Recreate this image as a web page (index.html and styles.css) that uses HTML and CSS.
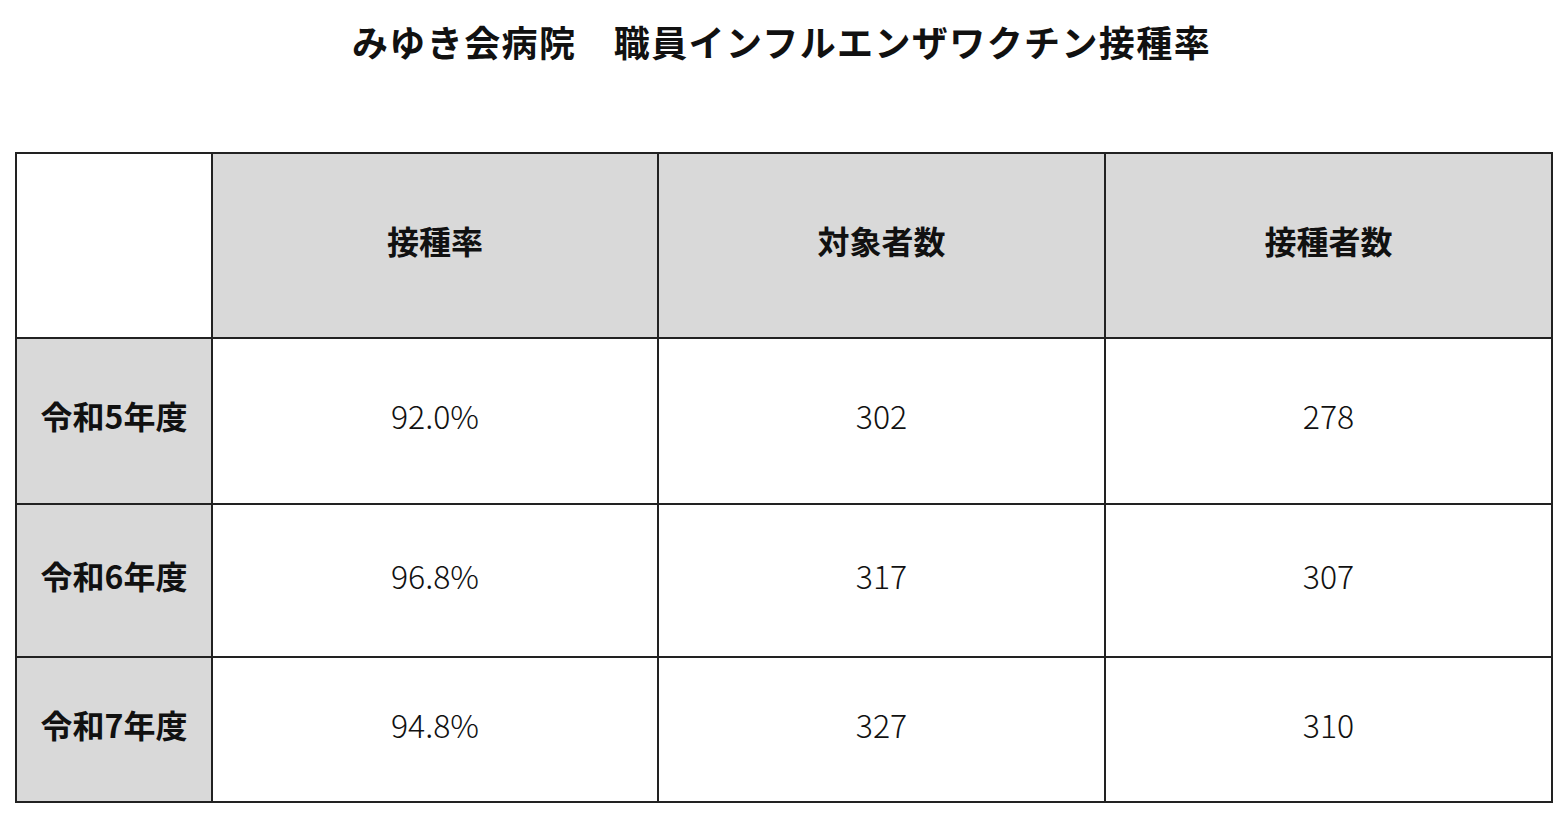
FILE: index.html
```html
<!DOCTYPE html>
<html lang="ja">
<head>
<meta charset="utf-8">
<title>みゆき会病院　職員インフルエンザワクチン接種率</title>
<link rel="stylesheet" href="styles.css">
</head>
<body>
<h1 class="title">みゆき会病院　職員インフルエンザワクチン接種率</h1>
<div class="grid">
  <div class="cell corner"></div>
  <div class="cell head">接種率</div>
  <div class="cell head">対象者数</div>
  <div class="cell head">接種者数</div>

  <div class="cell rowhead">令和5年度</div>
  <div class="cell val">92.0%</div>
  <div class="cell val">302</div>
  <div class="cell val">278</div>

  <div class="cell rowhead">令和6年度</div>
  <div class="cell val">96.8%</div>
  <div class="cell val">317</div>
  <div class="cell val">307</div>

  <div class="cell rowhead">令和7年度</div>
  <div class="cell val">94.8%</div>
  <div class="cell val">327</div>
  <div class="cell val">310</div>
</div>
</body>
</html>
```
FILE: styles.css
```css
html, body {
  margin: 0;
  padding: 0;
  background: #fff;
}
body {
  font-family: "Noto Sans CJK JP", "Noto Sans", sans-serif;
  color: #111;
}
.title {
  margin: 0;
  padding-top: 16px;
  height: 54px;
  line-height: 50px;
  font-size: 36px;
  font-weight: 700;
  letter-spacing: 1.4px;
  text-align: center;
}
.grid {
  margin: 82px 0 0 15px;
  width: 1538px;
  box-sizing: border-box;
  display: grid;
  grid-template-columns: 194px 444px 445px 445px;
  grid-template-rows: 183px 164px 151px 143px;
  gap: 2px;
  padding: 2px;
  background: #222;
}
.cell {
  display: flex;
  align-items: center;
  justify-content: center;
  padding-bottom: 12px;
  font-size: 32px;
  background: #fff;
}
.corner {
  background: #fff;
}
.head {
  background: #d9d9d9;
  font-weight: 700;
}
.rowhead {
  background: #d9d9d9;
  font-weight: 700;
}
.val {
  font-weight: 300;
}
```
